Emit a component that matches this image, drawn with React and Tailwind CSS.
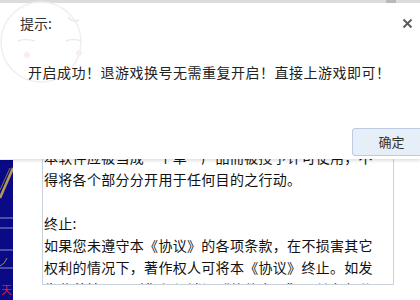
import React from 'react';

const cjk = { fontFamily: '"Noto Sans CJK SC", "Noto Sans", sans-serif' };

const agreementLines = [
  '本软件应被当成一个单一产品而被授予许可使用，不',
  '得将各个部分分开用于任何目的之行动。',
  '',
  '终止:',
  '如果您未遵守本《协议》的各项条款，在不损害其它',
  '权利的情况下，著作权人可将本《协议》终止。如发',
  '生此种情况，则您必须销毁“软件产品”及其各部分',
];

// faint face watermark behind the dialog title
const Watermark = () => (
  <svg className="absolute left-0 top-0 pointer-events-none" width="90" height="90" viewBox="0 0 90 90">
    <circle cx="41" cy="42" r="40" fill="none" stroke="#efefef" strokeWidth="1.5" />
    <path d="M68 17 q5 6 11 3" fill="none" stroke="#e9e9e9" strokeWidth="1.5" />
    <path d="M18 41 q8 -3 17 0" fill="none" stroke="#ebebeb" strokeWidth="1.5" />
    <path d="M66 41 q8 -3 15 0" fill="none" stroke="#ebebeb" strokeWidth="1.5" />
    <circle cx="27" cy="55" r="3" fill="#fcecec" />
    <circle cx="79" cy="53" r="3" fill="#fcecec" />
  </svg>
);

const Sidebar = () => (
  <div className="relative w-[13px] h-full bg-[#0b0a86] overflow-hidden">
    <svg className="absolute left-0 top-0" width="13" height="140" viewBox="0 0 13 140">
      <path d="M0 38 L13 8" stroke="#b49a5a" strokeWidth="2.5" fill="none" />
      <path d="M0 30 L10 8" stroke="#8c7440" strokeWidth="1" fill="none" />
      <line x1="0" y1="58" x2="13" y2="58" stroke="#8d8fc8" strokeWidth="1" />
      <line x1="0" y1="68" x2="13" y2="68" stroke="#8d8fc8" strokeWidth="1" />
      <line x1="0" y1="90" x2="13" y2="90" stroke="#8d8fc8" strokeWidth="1" />
      <path d="M7 98 q-2 6 -7 8" stroke="#9a8a60" strokeWidth="1" fill="none" />
      <line x1="0" y1="108" x2="13" y2="108" stroke="#8d8fc8" strokeWidth="1" />
    </svg>
    <span className="absolute left-[1px] top-[124px] text-[11px] leading-none text-[#e02020]" style={cjk}>
      天
    </span>
  </div>
);

export default function App() {
  return (
    <div className="relative w-[420px] h-[300px] overflow-hidden bg-white" style={cjk}>
      {/* background window */}
      <div className="flex h-full">
        <div className="flex flex-col w-[13px]">
          <div className="h-[160px]" />
          <div className="flex-1">
            <Sidebar />
          </div>
        </div>
        <div className="w-[29px]" />
        <div className="flex flex-col">
          <div className="h-[146px]" />
          <div className="w-[352px] h-[139px] border border-[#c9d2dc] border-t-0 overflow-hidden pl-[1px] text-[14px] leading-[22px] tracking-[0.3px] text-[#111]">
            {agreementLines.map((line, i) => (
              <div key={i} className="h-[22px] whitespace-nowrap">
                {line}
              </div>
            ))}
          </div>
        </div>
      </div>

      {/* dialog */}
      <div className="absolute left-0 right-0 top-0 h-[159px] bg-white shadow-[0_2px_3px_rgba(0,0,0,0.12)]">
        <div className="flex h-[3px] bg-[#dcdcdc]">
          <div className="w-[386px]" />
          <div className="w-[10px] bg-[#b9b9b9]" />
        </div>
        <Watermark />
        <div className="relative flex items-center justify-between pl-[20px] pr-[7px] pt-[10px]">
          <span className="text-[14px] leading-[20px] text-[#333]">提示:</span>
          <svg width="11" height="11" viewBox="0 0 11 11">
            <path d="M1.5 1.5 L9.5 9.5 M9.5 1.5 L1.5 9.5" stroke="#5a5a5a" strokeWidth="1.8" />
          </svg>
        </div>
        <div className="relative pl-[28px] pt-[29px] text-[14px] leading-[20px] tracking-[0.5px] text-[#222] whitespace-nowrap">
          开启成功！退游戏换号无需重复开启！直接上游戏即可！
        </div>
        <div className="flex justify-end pt-[46px] -mr-[12px]">
          <button className="w-[80px] h-[28px] rounded-[3px] border border-[#bccbe0] bg-[#e6eef8] text-[13px] text-[#333] pr-[1px]">
            确定
          </button>
        </div>
      </div>
    </div>
  );
}
